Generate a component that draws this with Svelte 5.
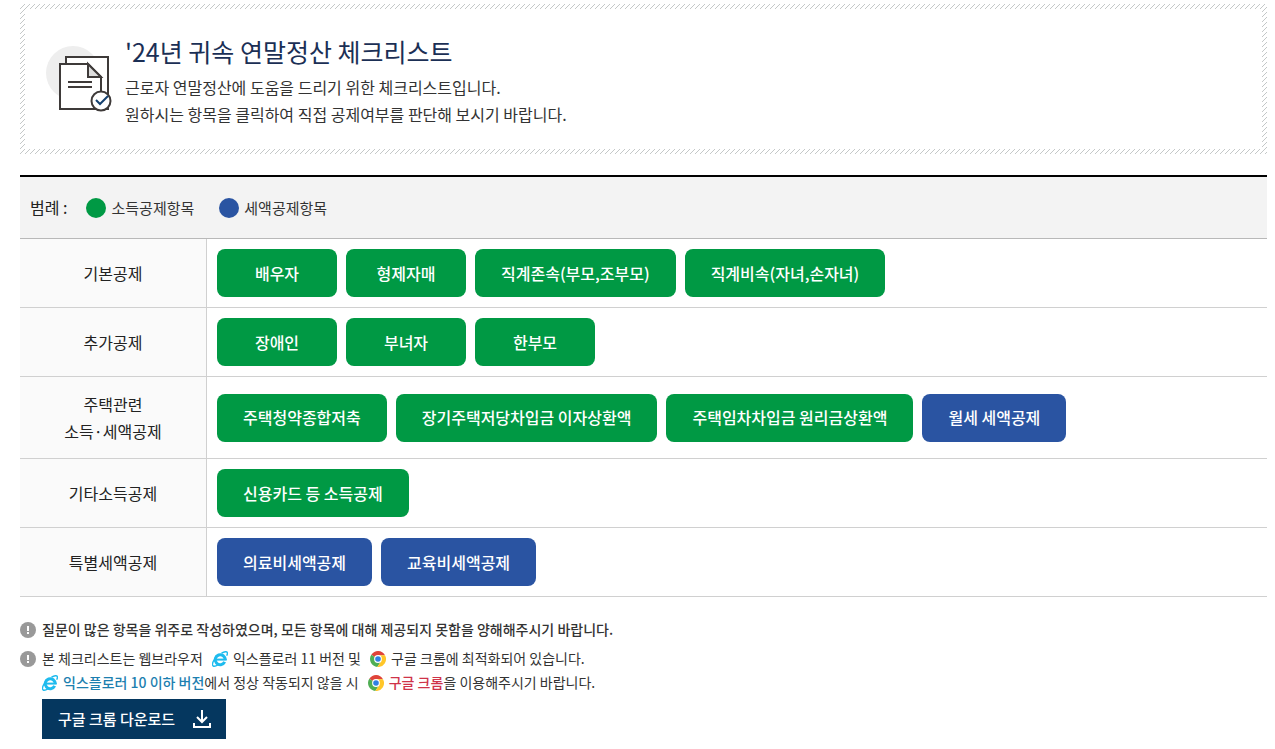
<script lang="ts">
  type Item = { label: string; kind: "income" | "tax" };
  type Row = { title: string[]; items: Item[] };

  const income = (label: string): Item => ({ label, kind: "income" });
  const tax = (label: string): Item => ({ label, kind: "tax" });

  const rows: Row[] = [
    {
      title: ["기본공제"],
      items: [income("배우자"), income("형제자매"), income("직계존속(부모,조부모)"), income("직계비속(자녀,손자녀)")],
    },
    { title: ["추가공제"], items: [income("장애인"), income("부녀자"), income("한부모")] },
    {
      title: ["주택관련", "소득·세액공제"],
      items: [
        income("주택청약종합저축"),
        income("장기주택저당차입금 이자상환액"),
        income("주택임차차입금 원리금상환액"),
        tax("월세 세액공제"),
      ],
    },
    { title: ["기타소득공제"], items: [income("신용카드 등 소득공제")] },
    { title: ["특별세액공제"], items: [tax("의료비세액공제"), tax("교육비세액공제")] },
  ];
</script>

{#snippet notice()}
  <svg class="notice" viewBox="0 0 16 16" aria-hidden="true">
    <circle cx="8" cy="8" r="8" fill="#999" />
    <path d="M7 4h2v5H7zM7 10h2v2H7z" fill="#fff" />
  </svg>
{/snippet}

{#snippet explorer()}
  <svg class="browser" viewBox="0 0 16 16" aria-hidden="true">
    <path d="M13.2 9A5 5 0 1 0 12.7 10.9" fill="none" stroke="#1ebbee" stroke-width="3" />
    <path d="M4 8.6h10.7" stroke="#1ebbee" stroke-width="2" />
    <path
      d="M9.5 2.2C12.4.6 14.8.3 15.3 1.5c.3.8 0 2-.7 3.2M2.6 8.2C.6 11.2.1 14 1.1 14.9c1 .8 3.2 0 5.2-1.4"
      fill="none"
      stroke="#1ebbee"
      stroke-width="1.4"
    />
  </svg>
{/snippet}

{#snippet chrome()}
  <svg class="browser" viewBox="0 0 16 16" aria-hidden="true">
    <path d="M8 8 1.3 3.7A8 8 0 0 1 15 4.2H8z" fill="#e0443a" />
    <path d="M8 8 1.3 3.7A8 8 0 0 0 7.3 16l4-6z" fill="#4fae54" />
    <path d="M8 4.2h7A8 8 0 0 1 7.3 16l4-6z" fill="#ffc629" />
    <circle cx="8" cy="8" r="3.9" fill="#fff" />
    <circle cx="8" cy="8" r="2.8" fill="#2f80e4" />
  </svg>
{/snippet}

<main>
  <section class="intro">
    <div class="intro-body">
      <svg class="intro-icon" viewBox="0 0 66 66" aria-hidden="true">
        <circle cx="27" cy="27" r="27" fill="#eee" />
        <path d="M20 11h42v52H20z" fill="#fff" stroke="#3e3a39" stroke-width="2" />
        <path d="M14 18h28l13 13v32H14z" fill="#fff" stroke="#3e3a39" stroke-width="2" />
        <path d="M42 18v13h13z" fill="#ddd" stroke="#3e3a39" stroke-width="2" />
        <path d="M22 36h24M22 41h24" stroke="#3e3a39" stroke-width="2" />
        <circle cx="55" cy="55" r="9.5" fill="#fff" stroke="#3e3a39" stroke-width="2" />
        <path d="m50 54 4 4 8-8" fill="none" stroke="#14406f" stroke-width="2" />
      </svg>
      <div>
        <h1>'24년 귀속 연말정산 체크리스트</h1>
        <p>근로자 연말정산에 도움을 드리기 위한 체크리스트입니다.</p>
        <p>원하시는 항목을 클릭하여 직접 공제여부를 판단해 보시기 바랍니다.</p>
      </div>
    </div>
  </section>

  <div class="legend">
    <span class="legend-title">범례 :</span>
    <span class="key income">소득공제항목</span>
    <span class="key tax">세액공제항목</span>
  </div>

  <table>
    <tbody>
      {#each rows as { title, items }}
        <tr>
          <th scope="row">
            {#each title as line}
              <div>{line}</div>
            {/each}
          </th>
          <td>
            <div class="items">
              {#each items as { label, kind }}
                <button type="button" class="item {kind}">{label}</button>
              {/each}
            </div>
          </td>
        </tr>
      {/each}
    </tbody>
  </table>

  <ul class="notes">
    <li>
      {@render notice()}
      <p class="strong">질문이 많은 항목을 위주로 작성하였으며, 모든 항목에 대해 제공되지 못함을 양해해주시기 바랍니다.</p>
    </li>
    <li>
      {@render notice()}
      <div>
        <p>
          본 체크리스트는 웹브라우저 <span class="named">{@render explorer()}익스플로러 11 버전</span> 및
          <span class="named">{@render chrome()}구글 크롬</span>에 최적화되어 있습니다.
        </p>
        <p>
          {@render explorer()}<b class="blue">익스플로러 10 이하 버전</b>에서 정상 작동되지 않을 시
          <span class="named">{@render chrome()}<b class="red">구글 크롬</b></span>을 이용해주시기 바랍니다.
        </p>
        <a class="download" href="#chrome">
          구글 크롬 다운로드
          <svg viewBox="0 0 20 20" aria-hidden="true">
            <path d="M10 1v12M5 8l5 5 5-5M2 14v4h16v-4" fill="none" stroke="#fff" stroke-width="2" />
          </svg>
        </a>
      </div>
    </li>
  </ul>
</main>

<style>
  :global(body) {
    background: #fff;
  }

  main {
    padding: 4px 8px 0 20px;
    color: #333;
    font-family: "Noto Sans CJK KR", sans-serif;
    font-size: 16px;
    line-height: 27px;
  }

  h1,
  p {
    margin: 0;
  }

  .intro {
    padding: 5px;
    background: url("data:image/svg+xml,%3Csvg xmlns='http://www.w3.org/2000/svg' width='5' height='5'%3E%3Cpath d='M4 0h1v1H4zM3 1h1v1H3zM2 2h1v1H2zM1 3h1v1H1zM0 4h1v1H0z' fill='%23c4c8c8'/%3E%3C/svg%3E");
  }

  .intro-body {
    display: flex;
    gap: 13px;
    padding: 24px 21px 21px;
    background: #fff;
  }

  .intro-icon {
    flex: none;
    width: 66px;
    height: 66px;
    margin-top: 13px;
  }

  h1 {
    margin-bottom: 5px;
    color: #1b2f55;
    font-size: 25px;
    font-weight: 400;
    line-height: 36px;
  }

  .legend {
    display: flex;
    align-items: center;
    margin-top: 21px;
    padding: 17px 10px;
    border-top: 2px solid #000;
    border-bottom: 1px solid #b8b8b8;
    background: #f3f3f3;
  }

  .legend-title {
    margin-right: 19px;
    color: #222;
  }

  .key {
    display: flex;
    align-items: center;
    gap: 5px;
    margin-right: 25px;
    font-size: 15px;
  }

  .key::before {
    width: 20px;
    height: 20px;
    border-radius: 50%;
    content: "";
  }

  .key.income::before,
  .item.income {
    background: #094;
  }

  .key.tax::before,
  .item.tax {
    background: #2a54a2;
  }

  table {
    width: 100%;
    border-collapse: separate;
    border-spacing: 0;
  }

  th,
  td {
    padding: 10px;
    border-bottom: 1px solid #d0d0d0;
  }

  th {
    box-sizing: border-box;
    width: 187px;
    padding: 14px 10px 13px;
    border-right: 1px solid #d0d0d0;
    background: #fafafa;
    color: #222;
    font-weight: 400;
  }

  .items {
    display: flex;
    flex-wrap: wrap;
    gap: 9px;
  }

  .item {
    min-width: 120px;
    height: 48px;
    padding: 0 26px;
    border: 0;
    border-radius: 8px;
    color: #fff;
    font: inherit;
    font-weight: 500;
    cursor: pointer;
  }

  .notes {
    margin: 20px 0 0;
    padding: 0;
    font-size: 14px;
    line-height: 24px;
    list-style: none;
  }

  .notes li {
    display: flex;
    gap: 6px;
    margin-bottom: 5px;
  }

  .strong {
    font-weight: 500;
  }

  .notice {
    flex: none;
    width: 16px;
    height: 16px;
    margin-top: 5px;
  }

  .browser {
    width: 16px;
    height: 16px;
    margin-right: 5px;
    vertical-align: -3px;
  }

  .named {
    margin-left: 6px;
  }

  b {
    font-weight: 500;
  }

  .blue {
    color: #1c7fb0;
  }

  .red {
    color: #cf3349;
  }

  .download {
    display: inline-flex;
    align-items: center;
    gap: 17px;
    height: 40px;
    margin-top: 5px;
    padding: 0 14px 0 16px;
    background: #05375f;
    color: #fff;
    font-size: 15px;
    font-weight: 500;
    text-decoration: none;
  }

  .download svg {
    width: 20px;
    height: 20px;
  }
</style>
